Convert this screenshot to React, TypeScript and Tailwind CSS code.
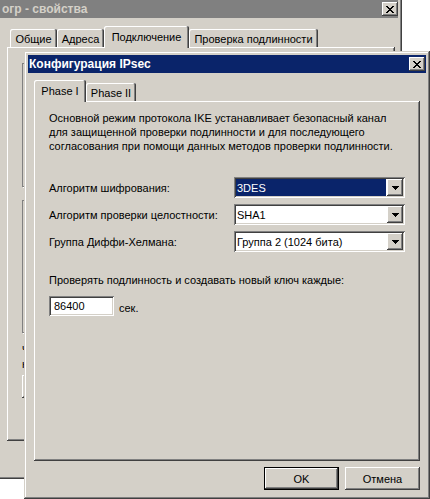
import React from "react";

const FONT = "font-['Liberation_Sans',Arial,sans-serif]";
const frame =
  "shadow-[inset_-1px_-1px_#404040,inset_1px_1px_#d4d0c8,inset_-2px_-2px_#808080,inset_2px_2px_#ffffff]";
const raised =
  "shadow-[inset_-1px_-1px_#404040,inset_1px_1px_#ffffff,inset_-2px_-2px_#808080,inset_2px_2px_#d4d0c8]";
const sunken =
  "shadow-[inset_1px_1px_#808080,inset_-1px_-1px_#ffffff,inset_2px_2px_#404040,inset_-2px_-2px_#d4d0c8]";
const panel =
  "shadow-[inset_-1px_-1px_#404040,inset_1px_1px_#ffffff,inset_-2px_-2px_#808080]";
const tabShadow =
  "shadow-[inset_-1px_0_#404040,inset_1px_1px_#ffffff,inset_-2px_0_#808080]";

function CloseBtn() {
  return (
    <div className={`w-[16px] h-[14px] bg-[#d4d0c8] ${raised} flex items-center justify-center`}>
      <svg width="8" height="7" viewBox="0 0 8 7" shapeRendering="crispEdges">
        <path
          d="M0 0h2v1h-2z M6 0h2v1h-2z M1 1h2v1h-2z M5 1h2v1h-2z M2 2h4v1h-4z M3 3h2v1h-2z M2 4h4v1h-4z M1 5h2v1h-2z M5 5h2v1h-2z M0 6h2v1h-2z M6 6h2v1h-2z"
          fill="#000"
        />
      </svg>
    </div>
  );
}

function Arrow() {
  return (
    <svg width="7" height="4" viewBox="0 0 7 4" shapeRendering="crispEdges">
      <path d="M0 0h7v1h-7z M1 1h5v1h-5z M2 2h3v1h-3z M3 3h1v1h-1z" fill="#000" />
    </svg>
  );
}

function Combo({ value, selected }: { value: string; selected?: boolean }) {
  return (
    <div className={`w-[171px] h-[21px] bg-white ${sunken} p-[2px] flex`}>
      <div
        className={`flex-1 flex items-center pl-[1px] mr-[1px] ${
          selected ? "bg-[#0a246a] text-white" : "text-black"
        }`}
      >
        {value}
      </div>
      <div className={`w-[16px] h-[17px] bg-[#d4d0c8] ${raised} flex items-center justify-center`}>
        <Arrow />
      </div>
    </div>
  );
}

function Tab({
  label,
  w,
  selected,
}: {
  label: string;
  w: number;
  selected?: boolean;
}) {
  return (
    <div
      style={{ width: w }}
      className={`bg-[#d4d0c8] rounded-t-[2px] ${tabShadow} flex justify-center ${
        selected ? "h-[22px] pt-[4px] relative z-10" : "h-[18px] mb-px pt-[3px]"
      }`}
    >
      {label}
    </div>
  );
}

export default function App() {
  return (
    <div className={`relative w-[430px] h-[499px] bg-white overflow-hidden text-[11px] leading-[14px] text-black ${FONT}`}>
      {/* Background window */}
      <div className={`absolute left-[-4px] top-[-4px] w-[406px] h-[483px] bg-[#d4d0c8] ${frame} p-[4px] flex flex-col`}>
        <div className="h-[18px] bg-[#808080] flex items-center justify-between pl-[2px]">
          <span className="font-bold text-[#d4d0c8] text-[12px]">огр - свойства</span>
          <CloseBtn />
        </div>
        <div className="mt-[9px] pl-[10px] flex items-end h-[21px] -mb-px relative z-10">
          <Tab label="Общие" w={47} />
          <Tab label="Адреса" w={47} />
          <Tab label="Подключение" w={85} selected />
          <Tab label="Проверка подлинности" w={129} />
        </div>
        <div className={`ml-[7px] w-[388px] h-[394px] ${panel} pt-[16px] pl-[15px] flex flex-col`}>
          <div className="w-[100px] h-[124px] border border-[#808080] shadow-[1px_1px_#ffffff]" />
          <div className="mt-[13px] w-[100px] h-[133px] border border-[#808080] shadow-[1px_1px_#ffffff]" />
          <div className="mt-[8px] whitespace-nowrap">чтобы использовать</div>
          <div className="mt-[2px] whitespace-nowrap">нажмите кнопку</div>
          <div className={`mt-[4px] w-[90px] h-[23px] ${raised}`} />
        </div>
      </div>

      {/* Foreground dialog */}
      <div className={`absolute left-[24px] top-[51px] w-[406px] h-[448px] bg-[#d4d0c8] ${frame} p-[4px] flex flex-col`}>
        <div className="h-[18px] bg-[#0a246a] flex items-center justify-between pl-[1px] pr-[1px]">
          <span className="font-bold text-white text-[12px]">Конфигурация IPsec</span>
          <CloseBtn />
        </div>
        <div className="mt-[7px] pl-[6px] flex items-end h-[22px] -mb-px relative z-10">
          <Tab label="Phase I" w={52} selected />
          <Tab label="Phase II" w={50} />
        </div>
        <div className={`ml-[6px] w-[386px] h-[360px] ${panel} pt-[10px] pl-[15px] flex flex-col`}>
          <p className="whitespace-nowrap">
            Основной режим протокола IKE устанавливает безопасный канал
            <br />
            для защищенной проверки подлинности и для последующего
            <br />
            согласования при помощи данных методов проверки подлинности.
          </p>
          <div className="mt-[24px] flex flex-col gap-[6px]">
            <div className="flex items-center h-[21px]">
              <span className="w-[185px]">Алгоритм шифрования:</span>
              <Combo value="3DES" selected />
            </div>
            <div className="flex items-center h-[21px]">
              <span className="w-[185px]">Алгоритм проверки целостности:</span>
              <Combo value="SHA1" />
            </div>
            <div className="flex items-center h-[21px]">
              <span className="w-[185px]">Группа Диффи-Хелмана:</span>
              <Combo value="Группа 2 (1024 бита)" />
            </div>
          </div>
          <div className="mt-[21px]">Проверять подлинность и создавать новый ключ каждые:</div>
          <div className="mt-[9px] flex items-center">
            <div className={`w-[65px] h-[20px] bg-white ${sunken} flex items-center pl-[5px]`}>86400</div>
            <span className="ml-[5px] mt-[3px]">сек.</span>
          </div>
        </div>
        <div className="mt-[6px] mr-[6px] flex justify-end gap-[6px]">
          <div className="w-[75px] h-[23px] border border-black">
            <div className={`w-full h-full ${raised} flex items-center justify-center`}>OK</div>
          </div>
          <div className={`w-[75px] h-[23px] ${raised} flex items-center justify-center`}>Отмена</div>
        </div>
      </div>
    </div>
  );
}
